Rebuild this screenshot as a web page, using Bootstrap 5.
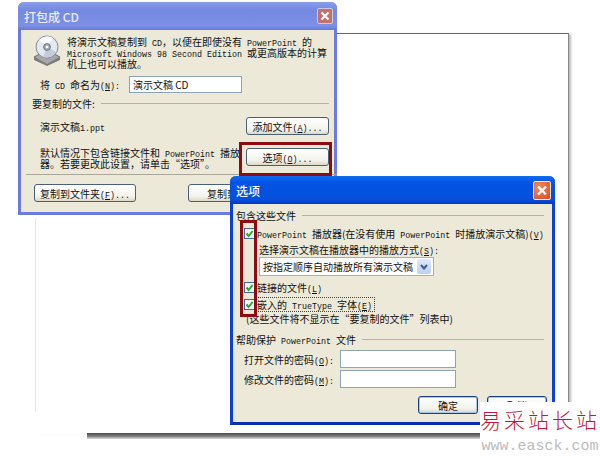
<!DOCTYPE html>
<html lang="zh-CN">
<head>
<meta charset="utf-8">
<title>打包成 CD</title>
<link href="https://cdn.jsdelivr.net/npm/bootstrap@5.3.0/dist/css/bootstrap.min.css" rel="stylesheet">
<style>
html,body{margin:0;background:#fff;width:600px;height:462px;overflow:hidden}
body{position:relative;font-family:"Noto Sans CJK SC","Liberation Sans",sans-serif;font-size:10px;line-height:11px;color:#111}
.lat{font-family:"Liberation Mono",monospace;font-size:8.33px;white-space:pre;line-height:0}
u{text-underline-offset:1px}
.sheet{position:absolute;left:36px;top:33px;width:533px;height:401px;border-top:1px solid #666;border-right:1px solid #888;box-shadow:3px 0 2px -1px #bbb}
.sheet-left{position:absolute;left:35px;top:218px;width:1px;height:194px;background:#e6e6e6}
.sheet-foot{position:absolute;left:87px;top:433px;width:483px;height:6px;background:linear-gradient(#4c4c4c,#777 50%,#ddd)}
.win{position:absolute;background:#ece9d8;border-radius:6px 6px 0 0}
.win-a{left:18px;top:2px;width:319px;height:213px;border:3px solid #6a7ce2;border-top:0;z-index:1}
.win-b{left:230px;top:176px;width:325px;height:249px;border:3px solid #0a3fd8;border-top:0;border-bottom-color:#0a2fb0;z-index:3}
.ttl{height:28px;margin:0 -3px;padding:0 4px 0 6px;border-radius:6px 6px 0 0;color:#fff;font-size:12px;font-weight:500}
.win-a .ttl{background:linear-gradient(#8a9eea,#7488e2 30%,#7d90e4 85%,#6577d8);color:#e8ecfb}
.win-b .ttl{background:linear-gradient(#0f6cf0,#0453e4 25%,#0450dc 85%,#0336c0)}
.xbtn{width:16px;height:16px;border-radius:2px;border:1px solid #eee;padding:0}
.win-a .xbtn{background:#c4706f;border-color:#c9c9e8}
.win-b .xbtn{width:18px;height:19px;background:radial-gradient(circle at 30% 30%,#f08a60,#dc4a20)}
.xbtn svg{display:block;width:100%;height:100%}
.rule{flex:1;height:1px;background:#b5b2a2;margin-left:6px}
.a-info{padding:6px 0 0 12px;gap:6px}
.cd{width:28px;height:31px;flex:none;margin-top:-1px}
.a-name{margin-top:7px;padding-left:19px;height:17px}
.field{height:17px;width:113px;border:1px solid #8ca3b8;background:#fff;border-radius:0;padding:0 3px;font:inherit;font-size:10px;line-height:15px;color:#111;min-height:0}
.field-pw{width:116px;height:18px}
.a-name .field{margin-left:4px}
.a-head{margin-top:3px;padding:0 5px 0 11px;height:14px}
.a-file{margin-top:7px;padding:0 5px 0 19px;height:18px}
.a-note{margin-top:13px;padding:0 5px 0 19px;height:18px}
.note-text{padding-top:1px}
.xp{height:18px;width:83px;padding:0;border:1px solid #4a6076;border-radius:3px;background:linear-gradient(#fff,#f4f3ec 70%,#dcd8c8);font-size:10px;line-height:15px;color:#111;--bs-btn-hover-bg:#fff}
.xp-wide{width:102px}
.xp-ok{width:60px;border-color:#1c3f80;box-shadow:inset 0 0 0 1px #a9c4ea}
.a-sep{height:1px;background:#aca899;margin:8px -3px 0 5px}
.a-foot{margin-top:9px;padding-left:13px;gap:52px}
.redbox{position:absolute;border:3px solid #8e0b12;z-index:2;pointer-events:none}
.red-a{left:239px;top:142px;width:93px;height:34px}
.red-b{left:240px;top:220px;width:17px;height:97px;z-index:4}
.b-body{padding:0 3px}
.b-head{margin-top:4px;height:14px;padding-right:5px}
.chk{width:11px;height:11px;flex:none;display:block}
.b-row{height:15px;padding-left:8px;gap:2px}
.b-row-1{margin-top:4px}
.b-sub{padding-left:23px;margin-top:1px;height:15px}
.pick{margin:0 0 0 23px;width:175px;height:19px;border:1px solid #9db1c6;background:#fff;padding:0 2px 0 3px}
.pick-arrow{width:14px;height:15px;background:linear-gradient(#dfe8fa,#bdcff3);border-radius:2px}
.b-row-2{margin-top:4px}
.b-row-3{margin-top:2px}
.focus-mark{display:inline-block;line-height:13px;outline:1px dotted #444;padding-right:2px}
.b-hint{padding-left:10px;margin-top:-1px;height:14px}
.b-head-2{margin-top:7px;height:14px;padding-right:5px}
.b-pw{padding-left:8px;margin-top:4px;height:18px}
.b-pw .label-w{width:96px}
.b-pw-2{margin-top:2px}
.b-foot{margin-top:8px;padding-left:182px;gap:9px}
.stamp{position:absolute;left:480px;top:402px;width:120px;height:56px;background:#fff;z-index:5;text-align:center}
.stamp-cn{font-family:"Liberation Serif","Noto Sans CJK SC",serif;font-size:21px;font-weight:300;line-height:28px;letter-spacing:3px;color:#c4143c;margin-top:5px;white-space:nowrap}
.stamp-url{font-family:"Liberation Mono",monospace;font-size:15px;line-height:18px;color:#bcbcbc;margin-top:3px;white-space:nowrap}
</style>
</head>
<body>
<svg width="0" height="0" class="position-absolute">
  <defs>
    <symbol id="tick" viewBox="0 0 11 11">
      <rect x=".5" y=".5" width="10" height="10" fill="#f4f7f4" stroke="#3c6a94"/>
      <path d="M2.5 5.5 4.6 8 8.6 3" fill="none" stroke="#2da52d" stroke-width="2"/>
    </symbol>
    <symbol id="ex" viewBox="0 0 16 16">
      <path d="M4 4 12 12M12 4 4 12" stroke="#fff" stroke-width="2.4" fill="none"/>
    </symbol>
  </defs>
</svg>

<div class="sheet"></div>
<div class="sheet-left"></div>
<div class="sheet-foot"></div>

<div class="win win-a">
  <div class="ttl d-flex align-items-center justify-content-between">
    <span>打包成 CD</span>
    <button class="xbtn" type="button" aria-label="关闭"><svg><use href="#ex"/></svg></button>
  </div>
  <div class="a-info d-flex">
    <svg class="cd" viewBox="0 0 28 31">
      <path d="M1 22 14 15 27 22 14 30Z" fill="#a7a7a7" stroke="#6e6e6e"/>
      <path d="M1 22V25L14 31 27 25V22L14 29Z" fill="#7c7c7c"/>
      <circle cx="14" cy="12" r="11" fill="#e4e8f0" stroke="#7f8a9c"/>
      <path d="M14 12 6 5A11 11 0 0 1 20 3Z" fill="#fbfbff"/>
      <path d="M14 12 23 17A11 11 0 0 1 10 22Z" fill="#c5cbdc"/>
      <circle cx="14" cy="12" r="3.4" fill="#a4aab8" stroke="#6d7482"/>
      <circle cx="14" cy="12" r="1.3" fill="#fff"/>
    </svg>
    <div>将演示文稿复制到<span class="lat"> CD</span>，以便在即使没有<span class="lat"> PowerPoint </span>的<br><span class="lat">Microsoft Windows 98 Second Edition </span>或更高版本的计算<br>机上也可以播放。</div>
  </div>
  <div class="a-name d-flex align-items-center">
    <span>将<span class="lat"> CD </span>命名为<span class="lat">(<u>N</u>): </span></span>
    <input class="form-control field" type="text" value="演示文稿 CD" aria-label="CD 名称">
  </div>
  <div class="a-head d-flex align-items-center"><span>要复制的文件:</span><span class="rule"></span></div>
  <div class="a-file d-flex align-items-center justify-content-between">
    <span>演示文稿<span class="lat">1.ppt</span></span>
    <button class="btn xp" type="button">添加文件<span class="lat">(<u>A</u>)...</span></button>
  </div>
  <div class="a-note d-flex align-items-center justify-content-between">
    <span class="note-text">默认情况下包含链接文件和<span class="lat"> PowerPoint </span>播放<br>器。若要更改此设置，请单击“选项”。</span>
    <button class="btn xp" type="button">选项<span class="lat">(<u>O</u>)...</span></button>
  </div>
  <div class="a-sep"></div>
  <div class="a-foot d-flex">
    <button class="btn xp xp-wide" type="button">复制到文件夹<span class="lat">(<u>F</u>)...</span></button>
    <button class="btn xp" type="button">复制到<span class="lat"> CD</span></button>
  </div>
</div>
<div class="redbox red-a"></div>

<div class="win win-b">
  <div class="ttl d-flex align-items-center justify-content-between">
    <span>选项</span>
    <button class="xbtn" type="button" aria-label="关闭"><svg><use href="#ex"/></svg></button>
  </div>
  <div class="b-body">
    <div class="b-head d-flex align-items-center"><span>包含这些文件</span><span class="rule"></span></div>
    <div class="b-row b-row-1 d-flex align-items-center"><svg class="chk"><use href="#tick"/></svg><span><span class="lat">PowerPoint </span>播放器(在没有使用<span class="lat"> PowerPoint </span>时播放演示文稿)<span class="lat">(<u>V</u>)</span></span></div>
    <div class="b-sub d-flex align-items-center"><span>选择演示文稿在播放器中的播放方式<span class="lat">(<u>S</u>):</span></span></div>
    <div class="pick d-flex align-items-center justify-content-between">
      <span>按指定顺序自动播放所有演示文稿</span>
      <span class="pick-arrow d-flex align-items-center justify-content-center"><svg width="8" height="6" viewBox="0 0 8 6"><path d="M1 1 4 4.5 7 1" fill="none" stroke="#3d5a94" stroke-width="2"/></svg></span>
    </div>
    <div class="b-row b-row-2 d-flex align-items-center"><svg class="chk"><use href="#tick"/></svg><span>链接的文件<span class="lat">(<u>L</u>)</span></span></div>
    <div class="b-row b-row-3 d-flex align-items-center"><svg class="chk"><use href="#tick"/></svg><span class="focus-mark">嵌入的<span class="lat"> TrueType </span>字体<span class="lat">(<u>E</u>)</span></span></div>
    <div class="b-hint d-flex align-items-center"><span>(这些文件将不显示在“要复制的文件”列表中)</span></div>
    <div class="b-head-2 d-flex align-items-center"><span>帮助保护<span class="lat"> PowerPoint </span>文件</span><span class="rule"></span></div>
    <div class="b-pw d-flex align-items-center"><span class="label-w">打开文件的密码<span class="lat">(<u>O</u>):</span></span><input class="form-control field field-pw" type="text" aria-label="打开文件的密码"></div>
    <div class="b-pw b-pw-2 d-flex align-items-center"><span class="label-w">修改文件的密码<span class="lat">(<u>M</u>):</span></span><input class="form-control field field-pw" type="text" aria-label="修改文件的密码"></div>
    <div class="b-foot d-flex">
      <button class="btn xp xp-ok" type="button">确定</button>
      <button class="btn xp xp-ok" type="button">取消</button>
    </div>
  </div>
</div>
<div class="redbox red-b"></div>

<div class="stamp">
  <div class="stamp-cn">易采站长站</div>
  <div class="stamp-url">www.easck.com</div>
</div>

<script src="https://cdn.jsdelivr.net/npm/bootstrap@5.3.0/dist/js/bootstrap.bundle.min.js"></script>
</body>
</html>
